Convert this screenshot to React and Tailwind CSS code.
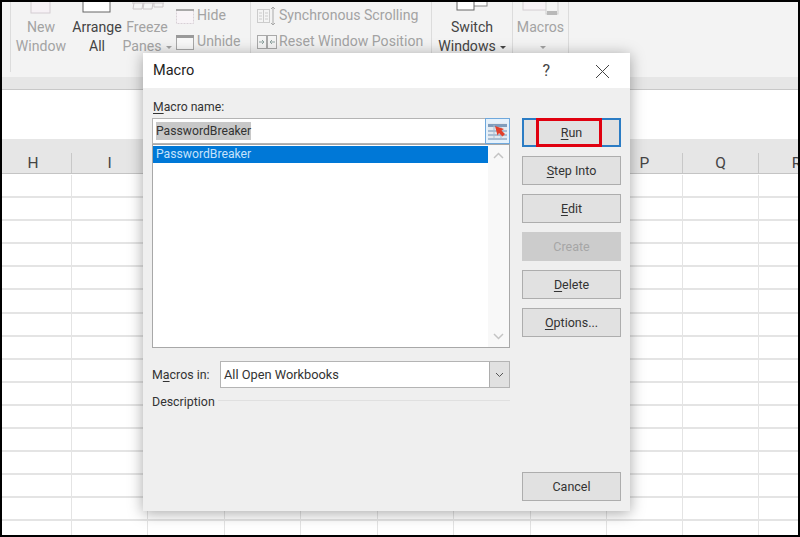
import React from "react";

const FONT = "font-['Roboto','Noto_Sans',sans-serif]";

function BigButton({ width, top, bottom, arrow, dark, icon }) {
  const color = dark ? "text-[#444444]" : "text-[#a3a3a3]";
  return (
    <div className={`flex flex-col items-center shrink-0 ${color}`} style={{ width }}>
      <div className="h-[16px] w-full flex justify-center items-start">{icon}</div>
      <div className="h-[19px] leading-[19px] whitespace-nowrap">{top}</div>
      <div className="h-[19px] leading-[19px] whitespace-nowrap">
        {bottom}
        {arrow && <span className="inline-block ml-[4px] align-middle w-0 h-0 border-x-[3px] border-x-transparent border-t-[3px] border-t-current" />}
      </div>
    </div>
  );
}

function Sep({ ml = 0 }) {
  return <div className="w-px h-[70px] bg-[#dcdcdc] shrink-0" style={{ marginLeft: ml }} />;
}

function SmallRow({ icon, label }) {
  return (
    <div className="flex items-center h-[26px] whitespace-nowrap">
      {icon}
      <span className="text-[#a3a3a3]">{label}</span>
    </div>
  );
}

function Ribbon() {
  return (
    <div className="h-[75px] bg-[#f3f3f3] flex items-start text-[14.1px] overflow-hidden shrink-0">
      <Sep ml={8} />
      <BigButton
        width={60}
        top="New"
        bottom="Window"
        icon={
          <svg width="22" height="14" viewBox="0 0 22 14" className="mt-[-2px]">
            <rect x="1" y="-2" width="19" height="15" fill="#f6f1f5" stroke="#d4cdd2" />
          </svg>
        }
      />
      <BigButton
        width={52}
        top="Arrange"
        bottom="All"
        dark
        icon={
          <svg width="30" height="12" viewBox="0 0 30 12">
            <rect x="1" y="-4" width="27" height="14" fill="#ffffff" stroke="#666666" />
          </svg>
        }
      />
      <BigButton
        width={48}
        top="Freeze"
        bottom="Panes"
        arrow
        icon={
          <svg width="34" height="8" viewBox="0 0 34 8" className="ml-[2px]">
            <path d="M1 1h32M3 1l-1 6h9l1-6M13 1l-1 6h9l1-6M23 1v4h9V1" fill="#f4f4f4" stroke="#cbc6c8" />
          </svg>
        }
      />
      <div className="w-[79px] pl-[4px] pt-[1px] flex flex-col shrink-0">
        <SmallRow
          label="Hide"
          icon={
            <svg width="19" height="17" viewBox="0 0 19 17" className="mr-[2px] ml-[1px]">
              <rect x="0.5" y="1.5" width="17" height="14" fill="#f8f4f7" stroke="#d8d0d6" strokeDasharray="2 1" />
              <rect x="0" y="1" width="18" height="2" fill="#a8a8a8" />
            </svg>
          }
        />
        <SmallRow
          label="Unhide"
          icon={
            <svg width="19" height="17" viewBox="0 0 19 17" className="mr-[2px] ml-[1px]">
              <rect x="0.5" y="1.5" width="17" height="14" fill="#f8f8f8" stroke="#a8a8a8" />
              <rect x="0" y="1" width="18" height="3" fill="#9a9a9a" />
            </svg>
          }
        />
      </div>
      <Sep />
      <div className="w-[180px] pl-[6px] pt-[1px] flex flex-col shrink-0">
        <SmallRow
          label="Synchronous Scrolling"
          icon={
            <svg width="21" height="20" viewBox="0 0 21 20" className="mr-[1px]">
              <rect x="0.5" y="3.5" width="12" height="13" fill="#f4f4f4" stroke="#cccccc" />
              <path d="M6.5 3.5v13M2 7h3M2 10h3M2 13h3M8 7h3M8 10h3M8 13h3" stroke="#cccccc" fill="none" />
              <path d="M16 1v18M14 3l2-2 2 2M14 17l2 2 2-2" stroke="#a9a9a9" fill="none" />
            </svg>
          }
        />
        <SmallRow
          label="Reset Window Position"
          icon={
            <svg width="21" height="16" viewBox="0 0 21 16" className="mr-[1px]">
              <rect x="0.5" y="1.5" width="9" height="13" fill="#f4f4f4" stroke="#a9a9a9" />
              <rect x="10.5" y="1.5" width="9" height="13" fill="#f4f4f4" stroke="#a9a9a9" />
              <path d="M2 8h5M5 6l2 2-2 2M18 8h-5M15 6l-2 2 2 2" stroke="#8fa3a0" fill="none" />
            </svg>
          }
        />
      </div>
      <Sep />
      <BigButton
        width={80}
        top="Switch"
        bottom="Windows"
        arrow
        dark
        icon={
          <svg width="32" height="10" viewBox="0 0 32 10" className="mt-[-1px]">
            <rect x="8" y="-6" width="23" height="11" fill="#ffffff" stroke="#888888" />
            <rect x="1" y="-6" width="17" height="15" fill="#ffffff" stroke="#666666" />
          </svg>
        }
      />
      <Sep />
      <BigButton
        width={55}
        top="Macros"
        bottom=""
        arrow
        icon={
          <svg width="38" height="14" viewBox="0 0 38 14">
            <rect x="1" y="-4" width="28" height="12" fill="#f6f1f5" stroke="#d4cdd2" />
            <rect x="24" y="-2" width="12" height="14" fill="#f4f4f4" stroke="#cfcfcf" />
            <rect x="25" y="9" width="10" height="4" fill="#b9b9b9" />
          </svg>
        }
      />
      <Sep />
    </div>
  );
}

const COLS = ["H", "I", "", "", "", "", "", "", "P", "Q", "R"];
const widths = [70, 76, 77, 76, 77, 76, 77, 76, 76, 76, 76];

function Sheet() {
  return (
    <div className="flex-1 bg-white overflow-hidden">
      <div className="flex h-[35px] bg-[#e6e6e6] border-b border-[#c4c4c4] text-[15.5px] text-[#444444]">
        {COLS.map((c, i) => (
          <div
            key={i}
            className={`shrink-0 flex items-end justify-center leading-[20px] relative ${i === 0 ? "pr-[8px]" : "pr-[1px]"}`}
            style={{ width: widths[i] }}
          >
            {c}
            <span className="absolute right-0 bottom-0 h-[20px] w-px bg-[#c8c8c8]" />
          </div>
        ))}
      </div>
      <div className="mt-[1px]">
        {Array.from({ length: 16 }).map((_, r) => (
          <div key={r} className="flex h-[23.1px] border-b-2 border-[#e4e4e4]">
            {COLS.map((c, i) => (
              <div key={i} className="shrink-0 border-r border-[#e4e4e4]" style={{ width: widths[i] }} />
            ))}
          </div>
        ))}
      </div>
    </div>
  );
}

function Btn({ children, first, disabled, className = "" }) {
  return (
    <div
      className={`relative h-[29px] shrink-0 flex items-center justify-center pt-[1px] text-[12.5px] border ${
        first
          ? "border-2 border-[#2b7cc4] bg-[#e1e1e1] text-[#333333]"
          : disabled
          ? "border-[#cccccc] bg-[#cccccc] text-[#a6a6a6]"
          : "border-[#adadad] bg-[#e1e1e1] text-[#333333]"
      } ${className}`}
    >
      {children}
      {first && <div className="absolute left-[12px] top-[-2px] w-[66px] h-[29px] border-[3px] border-[#e0000f]" />}
    </div>
  );
}

function Dialog() {
  return (
    <div className="absolute left-[141px] top-[51px] w-[487px] h-[458px] bg-[#efefef] shadow-[0_2px_14px_rgba(0,0,0,0.35)] flex flex-col text-[12.4px] text-[#333333]">
      <div className="h-[35px] bg-white flex items-center shrink-0 pl-[10px] pr-[20px] pt-[1px] text-[14.5px]">
        <span className="flex-1 text-[#222222]">Macro</span>
        <span className="text-[#444444] text-[16px] mr-[45px]">?</span>
        <svg width="15" height="15" viewBox="0 0 15 15">
          <path d="M1 1l13 13M14 1L1 14" stroke="#444444" strokeWidth="1" fill="none" />
        </svg>
      </div>
      <div className="flex flex-1 pl-[9px] pt-[30px] gap-[12px]">
        <div className="w-[358px] flex flex-col relative">
          <div className="absolute top-[-20px] left-[1px] leading-[18px] text-[12.2px]">
            <u className="underline-offset-2">M</u>acro name:
          </div>
          <div className="h-[26px] bg-white border border-[#b4b4b4] flex items-center shrink-0">
            <span className="ml-[3px] h-[18px] leading-[18px] text-[12.2px] bg-[#c8c8c8] text-[#333333] flex-none">PasswordBreaker</span>
            <div className="ml-auto mr-[-1px] w-[25px] h-[26px] bg-[#e5f1fb] border border-[#6fa8dc] flex items-center justify-center">
              <svg width="19" height="17" viewBox="0 0 19 17">
                <rect x="0" y="0" width="19" height="17" fill="#e3e9ef" />
                <rect x="0" y="1" width="19" height="3" fill="#7f9dbd" />
                <path d="M0 8h19M0 12h19M0 16h19" stroke="#6f93b8" />
                <path d="M6 2v15M13 4v13" stroke="#a9bdd1" />
                <path d="M7 3l9 3-2.500 1.500L17 11l-2.500 2.500L11 10l-1.500 2.500z" fill="#e2402a" />
              </svg>
            </div>
          </div>
          <div className="h-[204px] bg-white border border-[#a8a8a8] flex shrink-0">
            <div className="flex-1 pt-[1px]">
              <div className="h-[17px] leading-[17px] text-[12.2px] bg-[#0078d7] text-[#c5e2fb] pl-[3px]">PasswordBreaker</div>
            </div>
            <div className="w-[21px] bg-[#f8f8f8] flex flex-col justify-between items-center py-[7px]">
              <svg width="11" height="7" viewBox="0 0 11 7"><path d="M1 6l4.500-4.500L10 6" stroke="#c4c4c4" strokeWidth="1.500" fill="none" /></svg>
              <svg width="11" height="7" viewBox="0 0 11 7"><path d="M1 1l4.500 4.500L10 1" stroke="#c4c4c4" strokeWidth="1.500" fill="none" /></svg>
            </div>
          </div>
          <div className="flex items-center mt-[13px] h-[27px] shrink-0">
            <span className="w-[68px] pt-[1px]">M<u className="underline-offset-2">a</u>cros in:</span>
            <div className="flex-1 h-[27px] bg-white border border-[#b4b4b4] flex items-center pl-[3px]">
              <span className="flex-1 pt-[1px] text-[12.8px]">All Open Workbooks</span>
              <div className="w-[20px] h-[25px] bg-[#e1e1e1] border-l border-[#adadad] flex items-center justify-center">
                <svg width="9" height="6" viewBox="0 0 9 6"><path d="M1 1l3.500 3.500L8 1" stroke="#555555" fill="none" /></svg>
              </div>
            </div>
          </div>
          <div className="flex items-center mt-[5px] h-[18px] shrink-0">
            <span className="pr-[3px]">Description</span>
            <div className="flex-1 h-px bg-[#e0e0e0] mt-[-3px]" />
          </div>
        </div>
        <div className="w-[99px] flex flex-col gap-[9px]">
          <Btn first><span><u className="underline-offset-2">R</u>un</span></Btn>
          <Btn><span><u className="underline-offset-2">S</u>tep Into</span></Btn>
          <Btn><span><u className="underline-offset-2">E</u>dit</span></Btn>
          <Btn disabled>Create</Btn>
          <Btn><span><u className="underline-offset-2">D</u>elete</span></Btn>
          <Btn><span><u className="underline-offset-2">O</u>ptions...</span></Btn>
          <Btn className="mt-[126px]">Cancel</Btn>
        </div>
      </div>
    </div>
  );
}

export default function App() {
  return (
    <div className={`w-[800px] h-[537px] bg-black p-[2px] ${FONT}`}>
      <div className="relative w-full h-full overflow-hidden flex flex-col bg-white">
        <Ribbon />
        <div className="h-[13px] bg-[#e6e6e6] border-b border-[#c8c8c8] shrink-0" />
        <div className="h-[49px] bg-white shrink-0" />
        <Sheet />
        <Dialog />
      </div>
    </div>
  );
}
